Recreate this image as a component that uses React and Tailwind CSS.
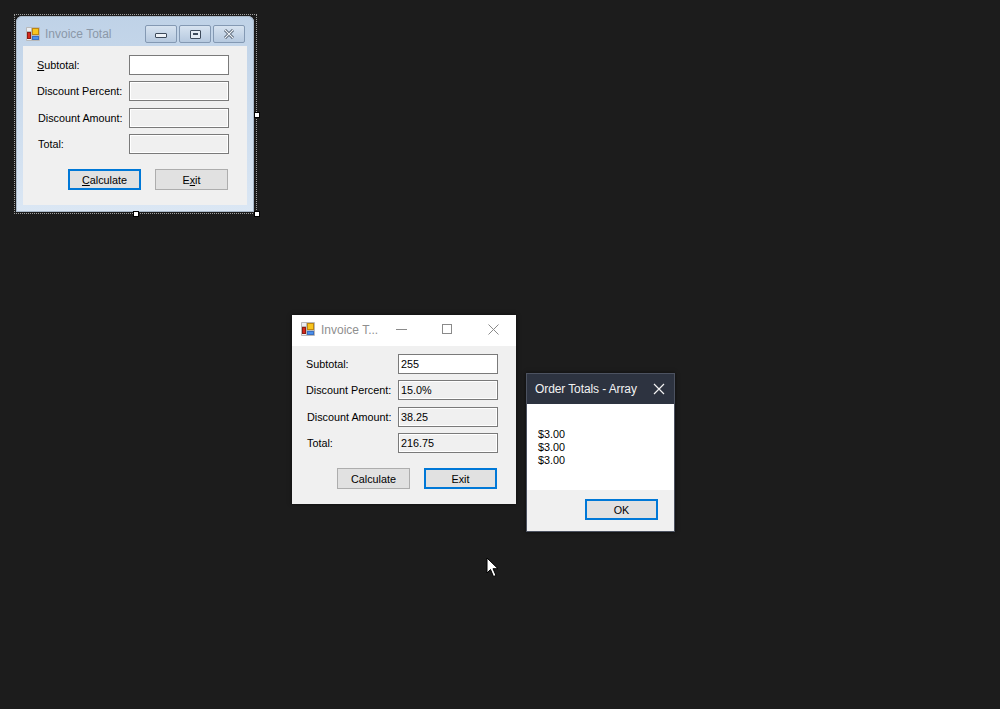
import React from 'react'

const AppIcon = () => (
  <svg width="14" height="14" viewBox="0 0 14 14" className="shrink-0">
    <path d="M0.5 0.5h13v13h-13z M0.5 4.5h5 M5.5 0.5v13 M5.5 8.5h8" fill="#eceef2" stroke="#b9b9b9" />
    <rect x="6.5" y="1.5" width="6" height="6" fill="#f7c51e" stroke="#bd8612" />
    <rect x="1.5" y="5.5" width="3" height="6" fill="#d6291b" stroke="#8d1c14" />
    <rect x="6.5" y="9.5" width="6" height="3" fill="#4a90ec" stroke="#3a6fc0" />
  </svg>
)

const Field = ({ value = '', editable = false }) => (
  <div
    className={`w-[100px] h-5 flex items-center pl-[1px] border border-[#7a7a7a] ${
      editable ? 'bg-white' : 'bg-[#f0f0f0] shadow-[inset_0_0_0_1px_#ffffff]'
    }`}
  >
    <span className="pl-[1px]">{value}</span>
  </div>
)

const Row = ({ label, indent, mt, children }) => (
  <div className={`flex items-center ${mt}`}>
    <div className={`w-[106px] ${indent} whitespace-nowrap`}>{label}</div>
    {children}
  </div>
)

const Button = ({ children, focused }) => (
  <div
    className={`w-[73px] h-[21px] flex items-center justify-center pt-[1px] bg-[#e1e1e1] ${
      focused ? 'border-2 border-[#0078d7]' : 'border border-[#adadad]'
    }`}
  >
    <span>{children}</span>
  </div>
)

const FormBody = ({ values, editable, accel, focus, className }) => (
  <div className={`bg-[#f0f0f0] text-[10.8px] text-black ${className}`}>
    <Row label={accel ? <><u>S</u>ubtotal:</> : 'Subtotal:'} indent="pl-[14px]" mt="">
      <Field value={values[0]} editable />
    </Row>
    <Row label="Discount Percent:" indent="pl-[14px]" mt="mt-[6px]">
      <Field value={values[1]} editable={editable} />
    </Row>
    <Row label="Discount Amount:" indent="pl-[15px]" mt="mt-[7px]">
      <Field value={values[2]} editable={editable} />
    </Row>
    <Row label="Total:" indent="pl-[15px]" mt="mt-[6px]">
      <Field value={values[3]} editable={editable} />
    </Row>
    <div className="flex gap-[14px] pl-[45px] mt-[15px]">
      <Button focused={focus === 'calc'}>{accel ? <><u>C</u>alculate</> : 'Calculate'}</Button>
      <Button focused={focus === 'exit'}>{accel ? <>E<u>x</u>it</> : 'Exit'}</Button>
    </div>
  </div>
)

const AeroButton = ({ children }) => (
  <div className="w-[32px] h-[18px] flex items-center justify-center rounded-[2px] border border-[#8499b3] bg-gradient-to-b from-[#d7e3f0] to-[#b6c9df]">
    {children}
  </div>
)

const Handle = ({ className }) => (
  <div className={`absolute w-[6px] h-[6px] bg-white border border-black ${className}`} />
)

const DesignerWindow = () => (
  <>
    <div className="absolute left-[14px] top-[14px] w-[243px] h-[200px] border border-dotted border-[#a0a0a0]" />
    <div className="absolute left-[16px] top-[16px] w-[238px] h-[196px] flex flex-col px-[7px] pb-[7px] rounded-t-[6px] bg-gradient-to-b from-[#bfd2e7] to-[#dbe7f4] shadow-[inset_0_0_0_1px_#a9b8c9] font-['Liberation_Sans',sans-serif]">
      <div className="h-[30px] shrink-0 flex items-center -mx-[7px] pt-[6px] pl-[10px] pr-[9px]">
        <AppIcon />
        <span className="ml-[5px] text-[12px] text-[#8b98a8]">Invoice Total</span>
        <div className="ml-auto flex gap-[2px]">
          <AeroButton><div className="w-[12px] h-[5px] mt-[3px] bg-[#eef2f7] border border-[#3d4a5a] rounded-[1px]" /></AeroButton>
          <AeroButton><div className="w-[11px] h-[9px] flex items-center justify-center bg-[#e4ebf3] border border-[#3d4a5a] rounded-[1px]"><div className="w-[5px] h-[2px] bg-[#3d4a5a]" /></div></AeroButton>
          <AeroButton>
            <svg width="12" height="10" viewBox="0 0 12 10">
              <path d="M2 1l8 8M10 1l-8 8" stroke="#3d4a5a" strokeWidth="2.8" />
              <path d="M2 1l8 8M10 1l-8 8" stroke="#eef2f7" strokeWidth="1.2" />
            </svg>
          </AeroButton>
        </div>
      </div>
      <FormBody
        values={['', '', '', '']}
        accel
        focus="calc"
        className="flex-1 pt-[9px]"
      />
    </div>
    <Handle className="left-[254px] top-[112px]" />
    <Handle className="left-[133px] top-[211px]" />
    <Handle className="left-[254px] top-[211px]" />
  </>
)

const RunningWindow = () => (
  <div className="absolute left-[292px] top-[315px] w-[224px] h-[189px] flex flex-col font-['Liberation_Sans',sans-serif] shadow-[0_0_4px_rgba(0,0,0,0.6)]">
    <div className="h-[31px] shrink-0 flex items-center bg-white pl-[9px] pb-[3px] text-[#8f8f8f]">
      <AppIcon />
      <span className="ml-[6px] mt-[2px] text-[12px] w-[70px] whitespace-nowrap">Invoice T...</span>
      <svg width="118" height="12" viewBox="0 0 118 12" className="mt-[2px]">
        <path d="M5 5.5h11" stroke="#8a8a8a" />
        <rect x="51.5" y="0.5" width="9" height="9" fill="none" stroke="#8a8a8a" />
        <path d="M97.5 0.5l10 10M107.5 0.5l-10 10" stroke="#8a8a8a" />
      </svg>
    </div>
    <FormBody
      values={['255', '15.0%', '38.25', '216.75']}
      focus="exit"
      className="flex-1 pt-[8px]"
    />
  </div>
)

const OrderDialog = () => (
  <div className="absolute left-[526px] top-[373px] w-[149px] h-[159px] flex flex-col border border-[#4c5260] font-['Liberation_Sans',sans-serif] shadow-[0_0_4px_rgba(0,0,0,0.6)]">
    <div className="h-[30px] shrink-0 flex items-center justify-between bg-[#2d3340] pl-[8px] pr-[9px] text-[12px] tracking-[-0.1px] text-[#f2f2f2]">
      <span>Order Totals - Array</span>
      <svg width="12" height="12" viewBox="0 0 12 12">
        <path d="M1 1l10 10M11 1l-10 10" stroke="#f2f2f2" strokeWidth="1.2" />
      </svg>
    </div>
    <div className="h-[86px] shrink-0 bg-white pl-[11px] pt-[24px] text-[10.8px] leading-[13px] text-black">
      <div>$3.00</div>
      <div>$3.00</div>
      <div>$3.00</div>
    </div>
    <div className="flex-1 bg-[#f0f0f0] flex justify-end pt-[9px] pr-[16px] text-[10.8px] text-black">
      <Button focused>OK</Button>
    </div>
  </div>
)

const Cursor = () => (
  <svg width="13" height="22" viewBox="0 0 13 22" className="absolute left-[486px] top-[557px]">
    <path d="M1 1v15l3.5-3.5 3 7 2.5-1-3-6.8h5z" fill="#fff" stroke="#000" strokeWidth="1" />
  </svg>
)

const App = () => (
  <div className="relative w-[1000px] h-[709px] overflow-hidden bg-[#1c1c1c]">
    <DesignerWindow />
    <RunningWindow />
    <OrderDialog />
    <Cursor />
  </div>
)

export default App
